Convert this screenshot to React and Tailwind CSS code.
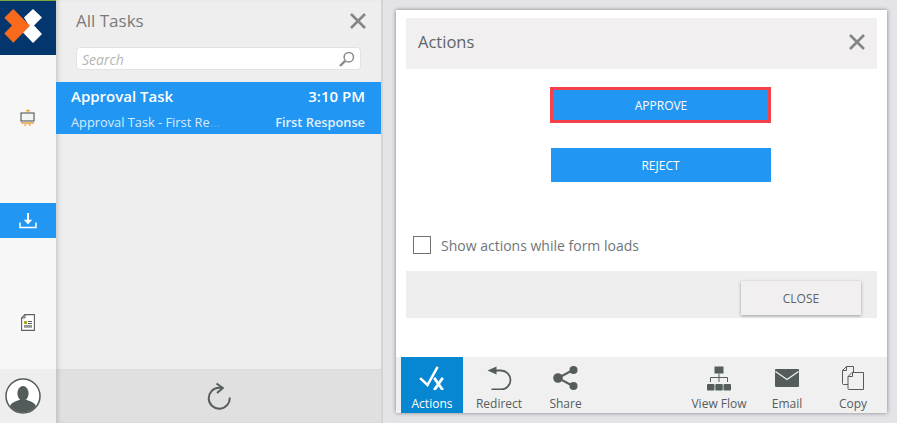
import React from 'react';

const CloseIcon = ({ className }) => (
    <svg viewBox="0 0 16 16" className={className} fill="none" stroke="#858585" strokeWidth="2.6">
        <path d="M1 1l14 14M15 1L1 15" />
    </svg>
);

const Logo = () => (
    <svg viewBox="0 0 56 54" className="w-14 h-[54px]">
        <path d="M33 8L42 16.500 34 24.500 42 33 33 42 21 29.500 29 24.500 24 16.500z" fill="#fff" />
        <path d="M13.300 8L30 24.800 13.300 41.700 4.300 32.500 12 24.500 4.300 16.800z" fill="#fa6a1c" />
    </svg>
);

const BoardIcon = () => (
    <svg viewBox="0 0 16 18" className="w-4 h-[18px]" fill="none">
        <path d="M6 1.500h4M8 1v2.500" stroke="#eea63f" strokeWidth="1.300" />
        <rect x="1" y="4" width="13" height="8" fill="#f4f4f4" stroke="#5b6564" strokeWidth="1.200" />
        <path d="M1 14h13M4.500 17l2-3M10.500 17l-2-3" stroke="#eea63f" strokeWidth="1.300" />
    </svg>
);

const DownloadIcon = () => (
    <svg viewBox="0 0 18 17" className="w-[18px] h-[17px]" fill="none" stroke="#fff">
        <path d="M1 10.500V15.500H17V10.500" strokeWidth="1.500" />
        <path d="M9 1v8" strokeWidth="2" />
        <path d="M4.800 7.800h8.400L9 12.500z" fill="#fff" stroke="none" />
    </svg>
);

const FormIcon = () => (
    <svg viewBox="0 0 14 17" className="w-[14px] h-[17px]" fill="none">
        <path d="M4 .6h9.400v15.800H.6V4z" stroke="#59625f" strokeWidth="1.100" fill="#fff" />
        <path d="M.6 4H4V.6" stroke="#59625f" strokeWidth="1" />
        <rect x="3" y="7" width="3" height="3" fill="#a9a82a" />
        <path d="M7 7.500h4M7 9.500h4M3 11.800h8M3 13h8" stroke="#59625f" strokeWidth="1" />
    </svg>
);

const Avatar = () => (
    <svg viewBox="0 0 36 36" className="w-9 h-9">
        <defs>
            <clipPath id="avatar-clip"><circle cx="18" cy="18" r="16.500" /></clipPath>
        </defs>
        <circle cx="18" cy="18" r="17" fill="#fff" stroke="#545c5b" strokeWidth="1.500" />
        <g clipPath="url(#avatar-clip)" fill="#545c5b">
            <ellipse cx="18" cy="15.500" rx="5.600" ry="7.500" />
            <path d="M5 36v-7c0-3 3-5 8-6.500l1-.5h8l1 .5c5 1.500 8 3.500 8 6.500v7z" />
        </g>
    </svg>
);

const SearchIcon = () => (
    <svg viewBox="0 0 16 16" className="w-4 h-4" fill="none" stroke="#8b8b8b">
        <circle cx="9.800" cy="6.200" r="4.700" strokeWidth="1.500" />
        <path d="M6.200 9.800L1 15" strokeWidth="2.400" />
    </svg>
);

const RefreshIcon = () => (
    <svg viewBox="0 0 26 28" className="w-[26px] h-7" fill="none" stroke="#555d5c" strokeWidth="2">
        <path d="M23.700 15.500A10.500 10.500 0 1 1 13 5.800H16.500" />
        <path d="M10.500 1.500L16.800 6 11 11" />
    </svg>
);

const ActionsIcon = () => (
    <svg viewBox="0 0 26 24" className="w-[26px] h-6" fill="none" stroke="#fff" strokeLinecap="square">
        <path d="M2 13l6.500 6L18 2" strokeWidth="2.500" />
        <path d="M16 13l7 10M23 13l-7 10" strokeWidth="2.800" />
    </svg>
);

const RedirectIcon = () => (
    <svg viewBox="0 0 26 24" className="w-[26px] h-6" fill="none" stroke="#555d5c" strokeWidth="1.800">
        <path d="M5 4.500h10a9.500 9.500 0 0 1 0 19H5.500" />
        <path d="M10.500 0.500v8L1.500 4.500z" fill="#555d5c" stroke="none" />
    </svg>
);

const ShareIcon = () => (
    <svg viewBox="0 0 26 26" className="w-[26px] h-[26px]" fill="#555d5c" stroke="#555d5c">
        <circle cx="20.500" cy="5" r="4" stroke="none" />
        <circle cx="5" cy="13" r="4.800" stroke="none" />
        <circle cx="20.500" cy="21" r="4" stroke="none" />
        <path d="M20 5L5 13l15 8" fill="none" strokeWidth="2" />
    </svg>
);

const FlowIcon = () => (
    <svg viewBox="0 0 24 25" className="w-6 h-[25px]" fill="#555d5c">
        <rect x="7.500" y="0.500" width="9" height="7" />
        <path d="M12 7.500V16M3.500 16v-4.500h17V16" fill="none" stroke="#555d5c" strokeWidth="1" />
        <rect x="0" y="18" width="7.500" height="6.500" rx="1" />
        <rect x="8.300" y="18" width="7.500" height="6.500" rx="1" />
        <rect x="16.500" y="18" width="7.500" height="6.500" rx="1" />
    </svg>
);

const MailIcon = () => (
    <svg viewBox="0 0 24 18" className="w-6 h-[18px]">
        <rect width="24" height="18" rx="1" fill="#555d5c" />
        <path d="M0.500 2.500L12 10.500 23.500 2.500" fill="none" stroke="#f0f0f0" strokeWidth="1.300" />
    </svg>
);

const CopyIcon = () => (
    <svg viewBox="0 0 22 24" className="w-[22px] h-6" fill="none" stroke="#555d5c" strokeWidth="1">
        <path d="M6 18.500H1.500a1 1 0 0 1-1-1V4.500L4.500 .5h7v6" />
        <path d="M.5 4.500h4v-4" />
        <path d="M7 23.500a1 1 0 0 1-1-1V10.500l4-4h11.500v17z" fill="#f0f0f0" />
        <path d="M6 10.500h4.500V6.500" />
    </svg>
);

const bottomItems = [
    { label: 'View Flow', icon: <FlowIcon />, width: 'w-[70px]' },
    { label: 'Email', icon: <MailIcon />, width: 'w-[66px]' },
    { label: 'Copy', icon: <CopyIcon />, width: 'w-[66px]' },
];

const ToolButton = ({ label, icon, className = '' }) => (
    <div className={`h-14 flex flex-col items-center justify-end pb-[1px] text-[12px] leading-[16px] text-[#555d5c] ${className}`}>
        <div className="h-[30px] mb-[3px] flex items-center justify-center">{icon}</div>
        <span>{label}</span>
    </div>
);

export default function App() {
    return (
        <div className="w-[897px] h-[423px] flex overflow-hidden bg-[#e4e3e8] font-['Open_Sans',sans-serif]">
            {/* Left rail */}
            <div className="w-14 shrink-0 flex flex-col bg-[#f7f7f7]">
                <div className="h-[55px] bg-[#03366c] border-t border-[#7ba83c]">
                    <Logo />
                </div>
                <div className="flex-1 flex flex-col pt-[45px] gap-[68px]">
                    <div className="h-[35px] flex items-center justify-center"><BoardIcon /></div>
                    <div className="h-[35px] flex items-center justify-center bg-[#2196f3]"><DownloadIcon /></div>
                    <div className="h-[35px] -mt-px flex items-center justify-center"><FormIcon /></div>
                </div>
                <div className="h-[54px] bg-[#eeeeee] flex items-center pl-[5px]">
                    <Avatar />
                </div>
            </div>

            {/* Task list */}
            <div className="w-[325px] shrink-0 flex flex-col bg-[#eeeeee] shadow-[inset_4px_0_4px_-2px_rgba(0,0,0,0.15)]">
                <div className="h-[47px] pl-5 pr-[15px] pb-[6px] flex items-center justify-between">
                    <span className="text-[17px] text-[#7a7a7a]">All Tasks</span>
                    <CloseIcon className="w-4 h-4" />
                </div>
                <div className="mx-5 h-[23px] flex items-center justify-between pl-[5px] pr-[5px] bg-white border border-[#e2e2e2] rounded-sm">
                    <span className="pt-px text-[14px] italic text-[#b5b5b5]">Search</span>
                    <SearchIcon />
                </div>
                <div className="mt-3 h-[52px] bg-[#2196f3] pl-[15px] pr-4 text-white">
                    <div className="pt-[3px] flex justify-between font-semibold text-[15px] leading-[22px]">
                        <span>Approval Task</span>
                        <span>3:10 PM</span>
                    </div>
                    <div className="mt-[6px] flex justify-between text-[12.8px] leading-[18px]">
                        <span className="text-[#d8ecfd]">Approval Task - First Re<span className="text-[#5aaaf0]">...</span></span>
                        <span className="font-semibold text-[#e3f1fd]">First Response</span>
                    </div>
                </div>
                <div className="flex-1" />
                <div className="h-[54px] bg-[#e0e0e0] flex items-center justify-center shadow-[inset_4px_0_4px_-2px_rgba(0,0,0,0.15)]">
                    <RefreshIcon />
                </div>
            </div>

            {/* Form area */}
            <div className="flex-1 pl-[13px] pr-[10px] pt-[10px] border-l-2 border-[#d4d4d6]">
                <div className="h-[403px] flex flex-col shadow-[0_0_4px_rgba(0,0,0,0.45)]">
                    <div className="flex-1 bg-white px-[10px] pt-2">
                        <div className="h-[51px] bg-[#f1eff0] pl-3 pr-[12px] pb-[3px] flex items-center justify-between">
                            <span className="text-[16.5px] text-[#5d6468]">Actions</span>
                            <CloseIcon className="w-4 h-4" />
                        </div>
                        <div className="flex flex-col items-center pl-[37px] pt-[18px]">
                            <button className="w-[221px] h-9 pt-[2px] pl-[2px] bg-[#2196f3] border-[3px] border-[#f6404a] text-white text-[12px]">
                                APPROVE
                            </button>
                            <button className="mt-[25px] ml-px w-[220px] h-[34px] pt-[2px] bg-[#2196f3] text-white text-[12px]">
                                REJECT
                            </button>
                        </div>
                        <div className="mt-[53px] pl-[7px] flex items-center gap-[10px]">
                            <div className="w-[18px] h-[18px] border border-[#6d7372]" />
                            <span className="pt-[2px] text-[14px] leading-[18px] text-[#6f7579]">Show actions while form loads</span>
                        </div>
                        <div className="mt-4 h-[47px] bg-[#efeeef] flex items-start justify-end pr-4 pt-[10px]">
                            <button className="w-[120px] h-[34px] pt-[2px] bg-[#f1eff0] text-[12px] text-[#5d6468] shadow-[0_1px_3px_rgba(0,0,0,0.35)]">
                                CLOSE
                            </button>
                        </div>
                    </div>

                    {/* Bottom toolbar */}
                    <div className="h-14 shrink-0 bg-[#f0f0f0] flex justify-between pl-[5px] pr-px">
                        <div className="flex">
                            <ToolButton label="Actions" icon={<ActionsIcon />} className="w-[62px] bg-[#0787d1] !text-white font-medium" />
                            <ToolButton label="Redirect" icon={<RedirectIcon />} className="w-[72px]" />
                            <ToolButton label="Share" icon={<ShareIcon />} className="w-[61px]" />
                        </div>
                        <div className="flex">
                            {bottomItems.map((item) => (
                                <ToolButton key={item.label} label={item.label} icon={item.icon} className={item.width} />
                            ))}
                        </div>
                    </div>
                </div>
            </div>
        </div>
    );
}
